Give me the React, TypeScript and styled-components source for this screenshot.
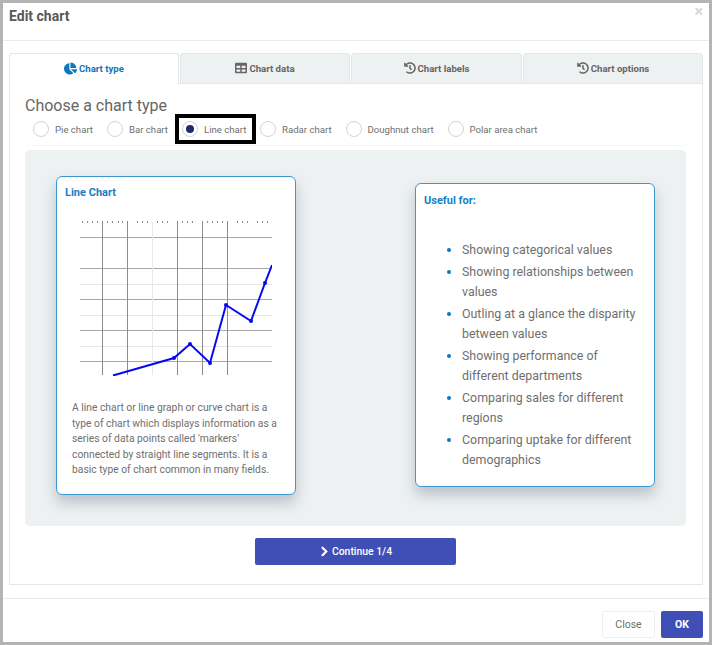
import React from 'react'
import styled, { createGlobalStyle } from 'styled-components'
import { FaChartPie, FaChevronRight, FaHistory, FaTable } from 'react-icons/fa'

const GlobalStyle = createGlobalStyle`
  html, body {
    margin: 0;
    padding: 0;
    background: #fff;
  }
  * {
    box-sizing: border-box;
  }
`

const tabs = [
  { label: 'Chart type', icon: <FaChartPie size={13} />, width: 170 },
  { label: 'Chart data', icon: <FaTable size={12} />, width: 170 },
  { label: 'Chart labels', icon: <FaHistory size={12} />, width: 171 },
  { label: 'Chart options', icon: <FaHistory size={12} />, width: 180 },
]

const chartTypes = ['Pie chart', 'Bar chart', 'Line chart', 'Radar chart', 'Doughnut chart', 'Polar area chart']

const usefulFor = [
  'Showing categorical values',
  'Showing relationships between values',
  'Outling at a glance the disparity between values',
  'Showing performance of different departments',
  'Comparing sales for different regions',
  'Comparing uptake for different demographics',
]

const strongH = [17, 48, 79, 110, 141]
const faintH = [64, 95, 126]
const strongV = [22, 47, 97, 122, 147]
const ticks = [2, 7, 12, 17, 22, 27, 32, 38, 42, 47, 57, 62, 67, 77, 82, 87, 97, 102, 107, 112, 122, 127, 132, 137, 142, 147, 157, 162, 167, 177, 182, 187]
const points = [[94, 138], [110, 124], [130, 143], [146, 85], [171, 101], [185, 63]]

const LineChart = () => (
  <svg width="192" height="156" viewBox="0 0 192 156">
    {ticks.map((x) => (
      <rect key={x} x={x} y={1} width={1} height={2} fill="#8a8a8a" />
    ))}
    {faintH.map((y) => (
      <line key={y} x1="0" x2="192" y1={y + 0.5} y2={y + 0.5} stroke="#e6e6e6" />
    ))}
    {strongH.map((y) => (
      <line key={y} x1="0" x2="192" y1={y + 0.5} y2={y + 0.5} stroke="#a9a9a9" />
    ))}
    <line x1="72.5" x2="72.5" y1="2" y2="155" stroke="#e8e8e8" />
    {strongV.map((x) => (
      <line key={x} x1={x + 0.5} x2={x + 0.5} y1="2" y2="155" stroke="#8c8c8c" />
    ))}
    <polyline
      points="33,155.5 94,138 110,124 130,143 146,85 171,101 185,63 192,45"
      fill="none"
      stroke="#0808f0"
      strokeWidth="2"
    />
    {points.map(([x, y]) => (
      <circle key={x} cx={x} cy={y} r="2" fill="#0808f0" />
    ))}
  </svg>
)

const App: React.FC = () => {
  return (
    <>
      <GlobalStyle />
      <StyledFrame>
        <StyledHeader>
          <StyledTitle>Edit chart</StyledTitle>
          <StyledCloseX>×</StyledCloseX>
        </StyledHeader>
        <StyledBody>
          <StyledTabs>
            {tabs.map((tab, i) => (
              <StyledTab key={tab.label} $active={i === 0} $width={tab.width}>
                {tab.icon}
                {tab.label}
              </StyledTab>
            ))}
          </StyledTabs>
          <StyledTabPanel>
            <StyledHeading>Choose a chart type</StyledHeading>
            <StyledRadioRow>
              {chartTypes.map((name) => (
                <StyledRadioItem key={name} $selected={name === 'Line chart'}>
                  <StyledRadio $selected={name === 'Line chart'} />
                  {name}
                </StyledRadioItem>
              ))}
            </StyledRadioRow>
            <StyledPreview>
              <StyledChartCard>
                <StyledCardTitle>Line Chart</StyledCardTitle>
                <StyledChartWrap>
                  <LineChart />
                </StyledChartWrap>
                <StyledCardText>
                  A line chart or line graph or curve chart is a type of chart which displays information as a
                  series of data points called 'markers' connected by straight line segments. It is a basic type
                  of chart common in many fields.
                </StyledCardText>
              </StyledChartCard>
              <StyledUsefulCard>
                <StyledCardTitle>Useful for:</StyledCardTitle>
                <StyledList>
                  {usefulFor.map((item) => (
                    <li key={item}>{item}</li>
                  ))}
                </StyledList>
              </StyledUsefulCard>
            </StyledPreview>
            <StyledContinue>
              <FaChevronRight size={11} stroke="currentColor" strokeWidth={30} />
              Continue 1/4
            </StyledContinue>
          </StyledTabPanel>
        </StyledBody>
        <StyledFooter>
          <StyledCloseButton>Close</StyledCloseButton>
          <StyledOkButton>OK</StyledOkButton>
        </StyledFooter>
      </StyledFrame>
    </>
  )
}

const StyledFrame = styled.div`
  width: 712px;
  height: 645px;
  border: 3px solid #b4b4b4;
  background: #fff;
  font-family: Roboto, 'Liberation Sans', sans-serif;
  color: #6f6f6f;
  display: flex;
  flex-direction: column;
`

const StyledHeader = styled.div`
  height: 38px;
  flex: none;
  border-bottom: 1px solid #e9ecef;
  padding: 5px 6px 0 6px;
  display: flex;
  justify-content: space-between;
  align-items: flex-start;
`

const StyledTitle = styled.div`
  font-size: 14px;
  font-weight: 700;
  line-height: 16px;
  color: #595959;
`

const StyledCloseX = styled.div`
  font-size: 16px;
  font-weight: 700;
  line-height: 8px;
  color: #d8d8d8;
`

const StyledBody = styled.div`
  height: 557px;
  flex: none;
  padding: 12px 6px 13px 6px;
  display: flex;
  flex-direction: column;
`

const StyledTabs = styled.div`
  display: flex;
  gap: 1px;
  height: 31px;
  flex: none;
`

const StyledTab = styled.div<{ $active: boolean; $width: number }>`
  width: ${(props) => props.$width}px;
  flex: none;
  display: flex;
  align-items: center;
  justify-content: center;
  gap: 2px;
  font-size: 9.6px;
  font-weight: 700;
  border: 1px solid #e3e7ea;
  border-bottom: ${(props) => (props.$active ? 'none' : '1px solid #e3e7ea')};
  border-radius: 3px 3px 0 0;
  background: ${(props) => (props.$active ? '#fff' : '#edf1f2')};
  color: ${(props) => (props.$active ? '#0d78bd' : '#666')};
  position: relative;
  z-index: 1;
  height: ${(props) => (props.$active ? '32px' : '31px')};
  padding-bottom: ${(props) => (props.$active ? '2px' : '1px')};
`

const StyledTabPanel = styled.div`
  flex: 1;
  margin-top: -1px;
  border: 1px solid #e3e7ea;
  padding: 12px 16px 0 15px;
  display: flex;
  flex-direction: column;
`

const StyledHeading = styled.div`
  font-size: 16px;
  line-height: 20px;
  color: #666;
`

const StyledRadioRow = styled.div`
  display: flex;
  height: 32px;
  align-items: flex-start;
  margin: -2px 0 4px;
  padding-left: 8px;
  border-bottom: 1px solid #f7f8f9;
`

const StyledRadioItem = styled.div<{ $selected: boolean }>`
  display: flex;
  align-items: center;
  gap: 6px;
  font-size: 9.6px;
  height: 30px;
  white-space: nowrap;
  color: #6f6f6f;
  margin-right: ${(props) => (props.$selected ? '4px' : '14px')};
  ${(props) =>
    props.$selected &&
    `
    border: 4px solid #000;
    padding: 0 0 0 3px;
    margin-left: -7px;
    width: 81px;
  `}
`

const StyledRadio = styled.span<{ $selected: boolean }>`
  width: 16px;
  height: 16px;
  border-radius: 50%;
  border: 1px solid #d4d4d4;
  background: #fff;
  flex: none;
  display: flex;
  align-items: center;
  justify-content: center;

  &::after {
    content: '';
    width: 8px;
    height: 8px;
    border-radius: 50%;
    background: ${(props) => (props.$selected ? '#1f2a6b' : 'transparent')};
  }
`

const StyledPreview = styled.div`
  height: 376px;
  flex: none;
  background: #edf1f2;
  border-radius: 5px;
  padding: 26px 31px 0;
  display: flex;
  justify-content: space-between;
  align-items: flex-start;
`

const StyledCard = styled.div`
  width: 240px;
  background: #fff;
  border: 1px solid #3f97cf;
  border-radius: 6px;
  box-shadow: 0 8px 14px rgba(70, 85, 105, 0.3);
`

const StyledChartCard = styled(StyledCard)`
  height: 319px;
  padding: 9px 8px 0;
`

const StyledUsefulCard = styled(StyledCard)`
  height: 304px;
  margin-top: 7px;
  padding: 10px 8px 0;
`

const StyledCardTitle = styled.div`
  font-size: 11px;
  font-weight: 700;
  line-height: 14px;
  color: #1580c4;
`

const StyledChartWrap = styled.div`
  margin: 20px 0 0 15px;
  height: 156px;
  line-height: 0;
`

const StyledCardText = styled.div`
  margin: 24px 0 0 7px;
  font-size: 10.3px;
  line-height: 15.6px;
  width: 212px;
  color: #6f6f6f;
`

const StyledList = styled.ul`
  margin: 32px 0 0;
  padding: 0 0 0 38px;
  font-size: 12.4px;
  line-height: 20px;
  color: #6f6f6f;

  li {
    margin-bottom: 2px;
  }

  li::marker {
    color: #0d78bd;
  }
`

const StyledContinue = styled.button`
  width: 201px;
  height: 27px;
  margin: 12px auto 0;
  flex: none;
  border: 0;
  border-radius: 2px;
  background: #3f4fb5;
  color: #fff;
  font-family: inherit;
  font-size: 10.4px;
  font-weight: 500;
  display: flex;
  align-items: center;
  justify-content: center;
  gap: 2px;
`

const StyledFooter = styled.div`
  flex: 1;
  border-top: 1px solid #e9ecef;
  padding: 12px 6px 0 0;
  display: flex;
  justify-content: flex-end;
  align-items: flex-start;
  gap: 6px;
`

const StyledCloseButton = styled.button`
  width: 53px;
  height: 27px;
  border: 1px solid #eceff1;
  border-radius: 2px;
  background: #fff;
  color: #6f6f6f;
  font-family: inherit;
  font-size: 10.5px;
`

const StyledOkButton = styled.button`
  width: 42px;
  height: 27px;
  border: 0;
  border-radius: 2px;
  background: #3f4fb5;
  color: #fff;
  font-family: inherit;
  font-size: 10.5px;
  font-weight: 700;
`

export default App
